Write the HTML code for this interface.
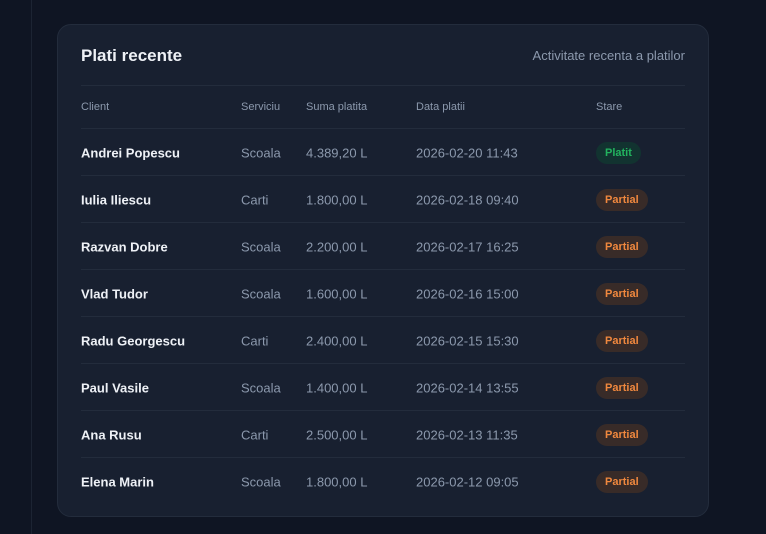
<!DOCTYPE html><html><head><style>
body{margin:0;width:766px;height:534px;background:#0f1523;font-family:"Liberation Sans",sans-serif;position:relative;overflow:hidden}
.vl{position:absolute;left:31px;top:0;width:1px;height:534px;background:#1c2433}
.card{position:absolute;left:57px;top:24px;width:650px;height:491px;background:#182030;border:1px solid #232c3c;border-radius:14px}
.t{position:absolute;left:23px;top:21px;font-size:17px;font-weight:bold;color:#eef1f6}
.s{position:absolute;right:23px;top:23px;font-size:13px;color:#8c99ad}
.ln{position:absolute;left:23px;width:604px;height:1px;background:#232c3c}
.r{position:absolute;left:-1px;width:650px;height:47px;font-size:13px;color:#8c99ad}
.r span{position:absolute;top:50%;transform:translateY(-50%);white-space:nowrap}
.h{font-size:11px}
.n{color:#eef1f6;font-weight:bold}
.b{height:22px;line-height:22px;padding:0 9px;border-radius:11px;font-size:11px;font-weight:bold}
.p{background:#382b28;color:#f0883e}
.g{background:#123330;color:#22b35e}
</style></head><body><div class="vl"></div>
<div class="card">
<div class="t">Plati recente</div><div class="s">Activitate recenta a platilor</div>
<div class="ln" style="top:60px"></div>
<div class="r h" style="top:60px;height:43px"><span style="left:24px">Client</span><span style="left:184px">Serviciu</span><span style="left:249px">Suma platita</span><span style="left:359px">Data platii</span><span style="left:539px">Stare</span></div>
<div class="ln" style="top:103px"></div>
<div class="r" style="top:104px"><span class="n" style="left:24px">Andrei Popescu</span><span style="left:184px">Scoala</span><span style="left:249px">4.389,20 L</span><span style="left:359px">2026-02-20 11:43</span><span class="b g" style="left:539px">Platit</span></div>
<div class="ln" style="top:150px"></div>
<div class="r" style="top:151px"><span class="n" style="left:24px">Iulia Iliescu</span><span style="left:184px">Carti</span><span style="left:249px">1.800,00 L</span><span style="left:359px">2026-02-18 09:40</span><span class="b p" style="left:539px">Partial</span></div>
<div class="ln" style="top:197px"></div>
<div class="r" style="top:198px"><span class="n" style="left:24px">Razvan Dobre</span><span style="left:184px">Scoala</span><span style="left:249px">2.200,00 L</span><span style="left:359px">2026-02-17 16:25</span><span class="b p" style="left:539px">Partial</span></div>
<div class="ln" style="top:244px"></div>
<div class="r" style="top:245px"><span class="n" style="left:24px">Vlad Tudor</span><span style="left:184px">Scoala</span><span style="left:249px">1.600,00 L</span><span style="left:359px">2026-02-16 15:00</span><span class="b p" style="left:539px">Partial</span></div>
<div class="ln" style="top:291px"></div>
<div class="r" style="top:292px"><span class="n" style="left:24px">Radu Georgescu</span><span style="left:184px">Carti</span><span style="left:249px">2.400,00 L</span><span style="left:359px">2026-02-15 15:30</span><span class="b p" style="left:539px">Partial</span></div>
<div class="ln" style="top:338px"></div>
<div class="r" style="top:339px"><span class="n" style="left:24px">Paul Vasile</span><span style="left:184px">Scoala</span><span style="left:249px">1.400,00 L</span><span style="left:359px">2026-02-14 13:55</span><span class="b p" style="left:539px">Partial</span></div>
<div class="ln" style="top:385px"></div>
<div class="r" style="top:386px"><span class="n" style="left:24px">Ana Rusu</span><span style="left:184px">Carti</span><span style="left:249px">2.500,00 L</span><span style="left:359px">2026-02-13 11:35</span><span class="b p" style="left:539px">Partial</span></div>
<div class="ln" style="top:432px"></div>
<div class="r" style="top:433px"><span class="n" style="left:24px">Elena Marin</span><span style="left:184px">Scoala</span><span style="left:249px">1.800,00 L</span><span style="left:359px">2026-02-12 09:05</span><span class="b p" style="left:539px">Partial</span></div>
</div></body></html>
